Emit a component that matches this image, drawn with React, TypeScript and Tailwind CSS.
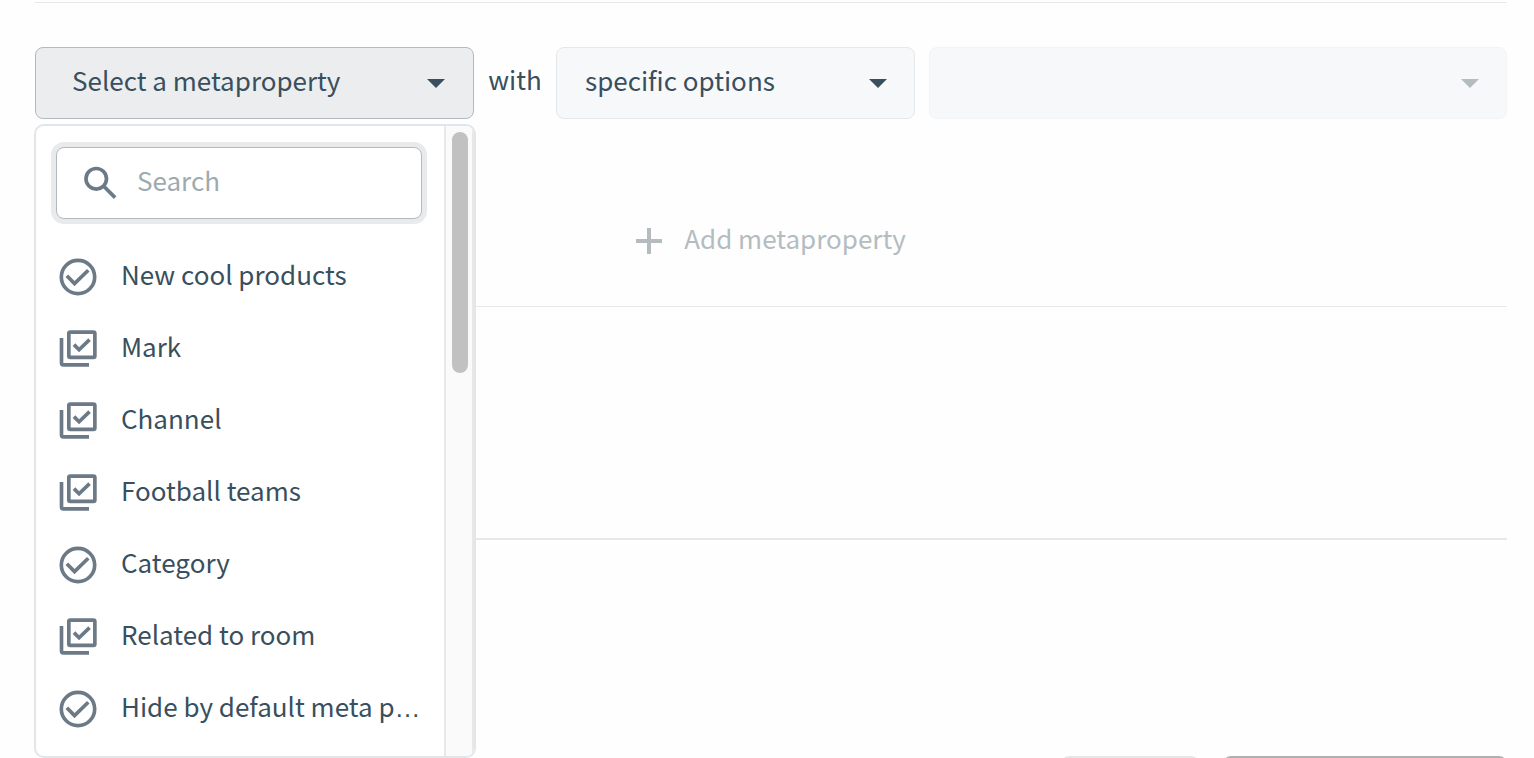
import { useState } from "react";
import type { ReactNode } from "react";

type MetapropertyKind = "single" | "multiple";

interface Metaproperty {
  name: string;
  kind: MetapropertyKind;
}

const METAPROPERTIES: Metaproperty[] = [
  { name: "New cool products", kind: "single" },
  { name: "Mark", kind: "multiple" },
  { name: "Channel", kind: "multiple" },
  { name: "Football teams", kind: "multiple" },
  { name: "Category", kind: "single" },
  { name: "Related to room", kind: "multiple" },
  { name: "Hide by default meta property", kind: "single" },
];

const MAX_NAME_LENGTH = 22;

function Icon({ className, children }: { className?: string; children: ReactNode }) {
  return (
    <svg viewBox="0 0 24 24" fill="none" stroke="currentColor" strokeWidth="2" aria-hidden="true" className={className}>
      {children}
    </svg>
  );
}

function Caret({ className }: { className: string }) {
  return (
    <svg viewBox="0 0 18 9" fill="currentColor" aria-hidden="true" className={className}>
      <path d="M0 0h18L9 9z" />
    </svg>
  );
}

function KindIcon({ kind }: { kind: MetapropertyKind }) {
  if (kind === "single") {
    return (
      <Icon className="size-11 shrink-0 text-[#6b7a86]">
        <circle cx="12" cy="12" r="9.1" />
        <path d="M5.9 11.3l4.2 4.3L17.6 8.3" />
      </Icon>
    );
  }
  return (
    <Icon className="size-11 shrink-0 text-[#6b7a86]">
      <rect x="7" y="2.8" width="14.2" height="13.8" rx="0.8" />
      <path d="M3 6V19.7a1 1 0 0 0 1 1h14" />
      <path d="M9.8 9.6l2.8 2.8L18.3 6.9" />
    </Icon>
  );
}

function ItemName({ name }: { name: string }) {
  if (name.length <= MAX_NAME_LENGTH + 1) {
    return <span className="whitespace-nowrap pb-[6px]">{name}</span>;
  }
  // the CJK family centres its ellipsis vertically, so take the glyph from another one
  return (
    <span title={name} className="whitespace-nowrap pb-[6px]">
      {name.slice(0, MAX_NAME_LENGTH)}
      <span className="font-['Liberation_Sans',sans-serif] leading-none">…</span>
    </span>
  );
}

function MetapropertyMenu() {
  const [query, setQuery] = useState("");
  const items = METAPROPERTIES.filter((m) => m.name.toLowerCase().includes(query.toLowerCase()));

  return (
    <div className="absolute -left-px top-[77px] z-10 flex h-[634px] w-[442px] overflow-hidden rounded-[10px] border-2 border-[#e3e6e9] bg-white">
      <div className="min-w-0 flex-1 pl-5 pr-[22px] pt-[21px]">
        <label className="flex h-[72px] items-center gap-[14px] rounded-lg border border-[#b1babf] bg-white px-[22px] ring-[5px] ring-[#e8eaec]">
          <Icon className="size-11 shrink-0 text-[#6b7a86]">
            <circle cx="9.4" cy="9.7" r="5.6" />
            <path d="M13.5 13.8l6.2 6.2" />
          </Icon>
          <input
            type="text"
            aria-label="Search metaproperties"
            placeholder="Search"
            value={query}
            onChange={(e) => setQuery(e.target.value)}
            className="min-w-0 flex-1 bg-transparent pb-[6px] outline-none placeholder:text-[#9daaae]"
          />
        </label>
        <ul role="listbox" aria-label="Metaproperties" className="mt-[22px]">
          {items.map((item) => (
            <li key={item.name} role="option" aria-selected={false} className="flex h-[72px] items-center gap-[21px]">
              <KindIcon kind={item.kind} />
              <ItemName name={item.name} />
            </li>
          ))}
        </ul>
      </div>
      <div className="w-[30px] shrink-0 border-x-2 border-[#e8e8e8] bg-[#fafafa] px-[6px] pt-[6px]">
        <div className="h-[241px] w-4 rounded-full bg-[#c1c1c1]" />
      </div>
    </div>
  );
}

export default function App() {
  const [open, setOpen] = useState(true);

  return (
    <div className="h-screen overflow-hidden bg-[#fefefe] pl-[35px] pr-[27px] pt-[2px] font-['Noto_Sans_CJK_SC',sans-serif] text-[26px] leading-10 text-[#3a4f5d]">
      <section className="border-y border-[#e6e8ea] pt-11">
        <div className="flex items-center">
          <div className="relative w-[439px] shrink-0">
            <button
              type="button"
              aria-haspopup="listbox"
              aria-expanded={open}
              onClick={() => setOpen(!open)}
              className="flex h-[72px] w-full items-center justify-between rounded-lg border border-[#b1babf] bg-[#ebedef] pl-9 pr-7"
            >
              <span className="pb-[6px]">Select a metaproperty</span>
              <Caret className="h-[9px] w-[18px]" />
            </button>
            {open && <MetapropertyMenu />}
          </div>
          <label htmlFor="match" className="w-[82px] shrink-0 pb-2 text-center">
            with
          </label>
          <div className="relative w-[359px] shrink-0">
            <select
              id="match"
              className="h-[72px] w-full appearance-none rounded-lg border border-[#e5e8ea] bg-[#f7f8fa] pb-[6px] pl-7 pr-14"
            >
              <option>specific options</option>
            </select>
            <Caret className="pointer-events-none absolute right-7 top-8 h-[9px] w-[18px]" />
          </div>
          <div className="relative ml-[14px] flex-1 text-[#b4bcc0]">
            <select
              disabled
              aria-label="Options"
              className="h-[72px] w-full appearance-none rounded-lg border border-[#f2f4f6] bg-[#f7f8fa] pl-7 pr-14"
            />
            <Caret className="pointer-events-none absolute right-7 top-8 h-[9px] w-[18px]" />
          </div>
        </div>
        <div className="flex justify-center pb-[29px] pt-[86px]">
          <button type="button" disabled className="flex h-[72px] items-center gap-[22px] text-[#b4bcc0]">
            <svg viewBox="0 0 26 26" stroke="currentColor" strokeWidth="4" aria-hidden="true" className="size-[26px]">
              <path d="M13 0v26M0 13h26" />
            </svg>
            <span className="pb-[6px]">Add metaproperty</span>
          </button>
        </div>
      </section>
      <section className="h-[233px] border-b-2 border-[#e6e8ea]" />
      <footer className="flex justify-end gap-[24px] pt-[216px]">
        <button
          type="button"
          aria-label="Cancel"
          className="h-[72px] w-[138px] rounded-lg border-2 border-[#e6e6e6] bg-[#fafafa]"
        />
        <button type="button" aria-label="Save" className="h-[72px] w-[284px] rounded-lg bg-[#b0b0b0]" />
      </footer>
    </div>
  );
}
